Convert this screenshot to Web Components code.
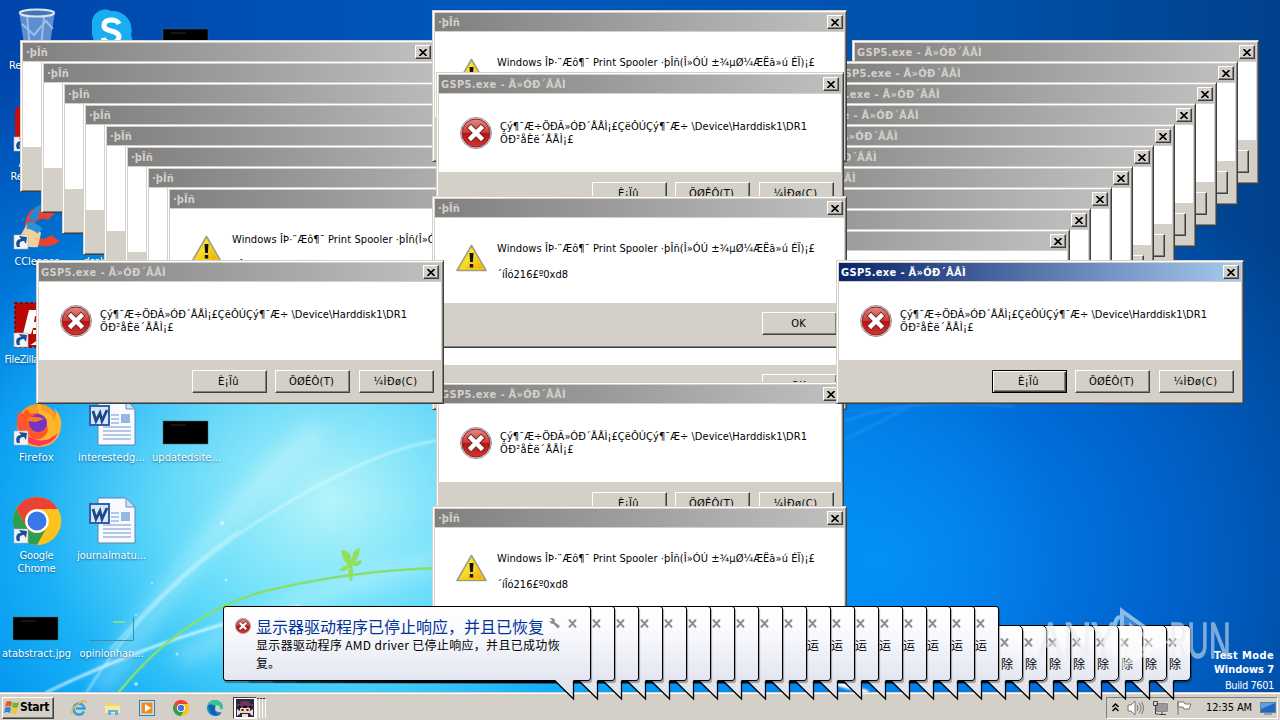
<!DOCTYPE html>
<html lang="en">
<head>
<meta charset="utf-8">
<title>Desktop</title>
<style>
    html, body {
        margin: 0;
        width: 1280px;
        height: 720px;
        overflow: hidden;
        background: #0078e0;
    }
    body {
        font: 11px/13px "DejaVu Sans Condensed", "DejaVu Sans", "Noto Sans CJK SC", sans-serif;
        color: #000;
    }
</style>
</head>
<body>
<desktop-screen></desktop-screen>

<script>
// Windows shortcut arrow, shared by several desktop icons
const arrow = `
    <rect x="1" y="32" width="14" height="14" fill="#f4f4f4" stroke="#a8b4c4" stroke-width=".6"/>
    <path d="M4 44c-2-5 0-8 4-8l-2-3 8 1-1 7-2-3c-4 0-5 2-4 6z" fill="#1b4f94"/>`;

const chromeArt = `
    <circle cx="24" cy="24" r="24" fill="#fbc116"/>
    <path d="M3.200 12A24 24 0 0 1 44.800 12L24 12A12 12 0 0 0 13.600 30z" fill="#ea4335"/>
    <path d="M3.200 12A24 24 0 0 0 24 48L34.400 30A12 12 0 0 1 13.600 30z" fill="#2f9e4f"/>
    <path d="M24 12h20.800A24 24 0 0 1 24 48l10.400-18z" fill="#fcc31e"/>
    <circle cx="24" cy="24" r="11.800" fill="#fff"/>
    <circle cx="24" cy="24" r="9.500" fill="#3b78e7"/>`;

const ART = {
    recycle: `
        <path d="M6 4L12 44q12 5 24 0L42 4z" fill="#8fb6e4" fill-opacity=".65"/>
        <path d="M14 8l3 34M31 10l-3 30M9 17l12 11 12-14 7 8" stroke="#dcecff" stroke-width="2" fill="none" opacity=".5"/>
        <ellipse cx="24" cy="6" rx="17" ry="3.500" fill="#4574b8" stroke="#dde6ee" stroke-width="2"/>`,
    skype: `
        <path d="M4 16a13 13 0 0 1 19-12 19 19 0 0 1 20 24 13 13 0 0 1-18 17A20 20 0 0 1 4 24z" fill="#1aaef0"/>
        <path d="M31 17c-2-5-14-6-15 1-1 8 15 4 15 12-1 8-14 7-16 1" fill="none" stroke="#fff" stroke-width="5"/>`,
    adobe: `
        <rect x="2" y="1" width="44" height="45" rx="6" fill="#c40d0d"/>
        <path d="M10 36c8-3 18-25 13-27s-1 14 16 19-12-2-29 8z" fill="none" stroke="#fff" stroke-width="3"/>${arrow}`,
    ccleaner: `
        <path d="M46 6A21 21 0 1 0 47 38l-9-6A10 10 0 1 1 35 17z" fill="#e8412c"/>
        <path d="M22 5l7-4-6 18-8-3z" fill="#1c8ed8"/>
        <path d="M14 21q10 1 14 9l-3 14q-12 2-20-7z" fill="#efcf9d"/>
        <path d="M14 22q8 1 13 6" stroke="#2794d8" stroke-width="7"/>${arrow}`,
    filezilla: `
        <rect x="2" y="2" width="44" height="44" fill="#b80808" stroke="#910202" stroke-width="2" stroke-dasharray="3 2"/>
        <path d="M10 33L16 9h22l-2 6H22l-1 6h12l-2 6H20l-2 6z" fill="#fff"/>
        <path d="M20 31h20L24 42h16" stroke="#fff" stroke-width="4" fill="none"/>${arrow}`,
    firefox: `
        <circle cx="25" cy="26" r="21" fill="#ff9b22"/>
        <path d="M5 13l5 2 3-5 5 5q8-3 15 2l6 10q2 12-12 14-12-1-14-10-10 4-9-10z" fill="#ff572b"/>
        <path d="M24 2q5 4 5 9 8 2 12 11 4-6 0-13 10 9 6 24-5 16-24 15-16-2-18-15 12 12 24 6 10-7 3-16-8-6-8-21z" fill="#ffb42a"/>
        <path d="M5 27q3 18 21 20 15-2 19-13-12 11-24 6-9-3-16-13z" fill="#ff3759"/>
        <circle cx="25" cy="24" r="9" fill="#7434c7"/>
        <path d="M14 19q8-3 17 1l-8 3-8-1z" fill="#ff781f"/>${arrow}`,
    chrome: chromeArt + arrow,
    word: `
        <path d="M10 1h28l9 9v36H10z" fill="#f8faff" stroke="#5a82b8"/>
        <path d="M38 1v9h9z" fill="#cfdff4" stroke="#6b8ec0"/>
        <path d="M15 28h28M15 32h28M15 36h28M15 40h28M23 16h8M23 20h8M23 24h8" stroke="#6f96d2"/>
        <rect x="33" y="15" width="9" height="9" fill="#94b8e4"/>
        <rect x="2" y="7" width="19" height="19" fill="#d8e7fa" stroke="#2f62a8" stroke-width="2"/>
        <path d="M5 12l3 10 4-8 2 8 5-11" fill="none" stroke="#1d478d" stroke-width="2.800"/>`,
    black: `
        <rect x="0" y="22" width="45" height="23" fill="#000" stroke="#49636a" stroke-width=".5"/>
        <path d="M8 26h15" stroke="#2b2b2b"/>`,
    picture: `
        <path d="M2 45.500h43.500V22" fill="none" stroke="#438ca0"/>
        <path d="M25 27h12" stroke="#7cdf93" stroke-width="2"/>`
};

const CLOSE = `<svg width="8" height="7" viewBox="0 0 8 7"><path d="M.5 0l7 7M7.500 0l-7 7" stroke="#000" stroke-width="1.600"/></svg>`;

const ERROR = `<svg viewBox="0 0 32 32">
    <defs><linearGradient id="r" x2="0" y2="1"><stop stop-color="#e58b85"/><stop offset=".48" stop-color="#cf3a3a"/><stop offset=".5" stop-color="#b51313"/><stop offset="1" stop-color="#d83434"/></linearGradient></defs>
    <circle cx="16" cy="16" r="15.500" fill="#e9e9e9" stroke="#777" stroke-width=".8"/>
    <circle cx="16" cy="16" r="14" fill="url(#r)" stroke="#8e2222"/>
    <path d="M11 11l10 10M21 11L11 21" stroke="#76251f" stroke-width="6.500" stroke-linecap="square"/>
    <path d="M11 11l10 10M21 11L11 21" stroke="#fff" stroke-width="4.500" stroke-linecap="square"/></svg>`;

const WARNING = `<svg viewBox="0 0 32 32">
    <defs><linearGradient id="y" x2="1" y2="1"><stop stop-color="#fff67c"/><stop offset=".5" stop-color="#f5dc28"/><stop offset="1" stop-color="#f59b00"/></linearGradient></defs>
    <path d="M15.500 2.500L30 27.500H1z" fill="url(#y)" stroke="#9b9b94" stroke-width="1.600" stroke-linejoin="round"/>
    <path d="M15.500 5L27.500 26H3.500z" fill="none" stroke="#ffd400"/>
    <path d="M13.500 10h4l-.6 9h-2.800zM13.800 21h3.400v3.500h-3.400z" fill="#111"/></svg>`;

// One line of text, tracked so that it takes the given width
class FitText extends HTMLElement {
    constructor() {
        super();
        this.attachShadow({ mode: "open" });
        this.shadowRoot.innerHTML = `
            <style>
                :host { display: inline-block; white-space: nowrap; }
            </style>
            <span><slot></slot></span>
        `;
    }

    connectedCallback() {
        const want = Number(this.getAttribute("width"));
        const count = this.textContent.length;
        const span = this.shadowRoot.querySelector("span");
        if (!want || !count) return;
        const have = span.getBoundingClientRect().width;
        span.style.letterSpacing = ((want - have) / count) + "px";
    }
}
customElements.define("fit-text", FitText);

class ClassicButton extends HTMLElement {
    constructor() {
        super();
        this.attachShadow({ mode: "open" });
        this.shadowRoot.innerHTML = `
            <style>
                :host {
                    display: flex;
                    align-items: center;
                    justify-content: center;
                    box-sizing: border-box;
                    width: 75px;
                    height: 23px;
                    padding-right: 2px;
                    background: #d4d0c8;
                    border: 1px solid;
                    border-color: #fff #404040 #404040 #fff;
                    box-shadow: inset -1px -1px #808080;
                }
                :host([focused]) {
                    border-color: #000;
                    box-shadow: inset 1px 1px #fff, inset -1px -1px #404040, inset -2px -2px #808080;
                }
            </style>
            <slot></slot>
        `;
    }
}
customElements.define("classic-button", ClassicButton);

class ClassicWindow extends HTMLElement {
    constructor() {
        super();
        this.attachShadow({ mode: "open" });
        this.shadowRoot.innerHTML = `
            <style>
                :host {
                    position: absolute;
                    display: flex;
                    flex-direction: column;
                    box-sizing: border-box;
                    padding: 2px;
                    background: #d4d0c8;
                    border: 1px solid;
                    border-color: #d4d0c8 #404040 #404040 #d4d0c8;
                    box-shadow: inset 1px 1px #fff, inset -1px -1px #808080;
                    overflow: hidden;
                }
                header {
                    display: flex;
                    flex: none;
                    align-items: center;
                    justify-content: space-between;
                    height: 18px;
                    margin: 0 0 1px;
                    padding: 0 2px;
                    background: linear-gradient(90deg, #808080, #c0c0c0);
                    color: #d4d0c8;
                    font-weight: bold;
                }
                :host([active]) header {
                    background: linear-gradient(90deg, #0a246a, #a6caf0);
                    color: #fff;
                }
                .close {
                    display: flex;
                    flex: none;
                    align-items: center;
                    justify-content: center;
                    box-sizing: border-box;
                    width: 16px;
                    height: 14px;
                    margin-left: auto;
                    margin-right: var(--close-inset, -1px);
                    background: #d4d0c8;
                    border: 1px solid;
                    border-color: #fff #404040 #404040 #fff;
                    box-shadow: inset -1px -1px #808080;
                }
                main {
                    display: flex;
                    flex: 1;
                    min-height: 0;
                    background: #fff;
                }
                footer {
                    display: flex;
                    flex: none;
                    gap: 8px;
                    justify-content: flex-end;
                }
            </style>
            <header><slot name="title"></slot><span class="close">${CLOSE}</span></header>
            <main><slot></slot></main>
            <footer><slot name="buttons"></slot></footer>
        `;
    }
}
customElements.define("classic-window", ClassicWindow);

// Message box in two kinds: "service" (warning) and "disk" (error)
class MessageBox extends HTMLElement {
    constructor() {
        super();
        this.attachShadow({ mode: "open" });
    }

    connectedCallback() {
        const disk = this.getAttribute("kind") === "disk";
        const bare = this.hasAttribute("bare");
        const label = text => bare ? "" : text;
        const title = this.hasAttribute("untitled") ? "" :
            disk ? `<fit-text width="125">GSP5.exe - Ã»ÓÐ´ÅÅÌ</fit-text>` : `<fit-text width="22">·þÎñ</fit-text>`;
        const text = disk
            ? `<fit-text width="307">Çý¶¯Æ÷ÖÐÃ»ÓÐ´ÅÅÌ¡£ÇëÔÚÇý¶¯Æ÷ \\Device\\Harddisk1\\DR1</fit-text><fit-text width="74">ÖÐ²åÈë´ÅÅÌ¡£</fit-text>`
            : `<fit-text width="318">Windows ÎÞ·¨Æô¶¯ Print Spooler ·þÎñ(Î»ÓÚ ±¾µØ¼ÆËã»ú ÉÏ)¡£</fit-text><fit-text class="last" width="71">´íÎó216£º0xd8</fit-text>`;
        const buttons = disk
            ? `<classic-button slot="buttons" ${this.hasAttribute("active") ? "focused" : ""}>${label(`<fit-text width="21">È¡Ïû</fit-text>`)}</classic-button>
               <classic-button slot="buttons">${label(`<fit-text width="45">ÖØÊÔ(T)</fit-text>`)}</classic-button>
               <classic-button slot="buttons" class="third">${label(`<fit-text width="44">¼ÌÐø(C)</fit-text>`)}</classic-button>`
            : `<classic-button slot="buttons">${label("OK")}</classic-button>`;
        this.shadowRoot.innerHTML = `
            <style>
                :host { display: contents; }
                classic-window {
                    left: ${this.getAttribute("x")}px;
                    top: ${this.getAttribute("y")}px;
                    width: ${disk ? (bare ? 407 : 408) : 415}px;
                    height: ${disk ? 144 : 152}px;
                    --close-inset: ${disk && !bare ? 0 : -1}px;
                }
                .icon {
                    flex: none;
                    width: 32px;
                    height: 32px;
                    margin: ${disk ? "23px 8px 0 21px" : "25px 9px 0 21px"};
                }
                .text {
                    display: flex;
                    flex-direction: column;
                    align-items: flex-start;
                    padding-top: ${disk ? 26 : 24}px;
                }
                .last { margin-top: 13px; }
                [slot="title"] { margin-left: ${disk ? 0 : 1}px; }
                classic-button { margin: ${disk ? 10 : 9}px 0 ${disk ? 8 : 10}px; }
                classic-button:last-of-type { margin-right: 7px; }
                .third { margin-left: 1px; }
            </style>
            <classic-window ${this.hasAttribute("active") ? "active" : ""}>
                <span slot="title">${title}</span>
                ${bare ? "" : `<span class="icon">${disk ? ERROR : WARNING}</span><div class="text">${text}</div>`}
                ${buttons}
            </classic-window>
        `;
    }
}
customElements.define("message-box", MessageBox);

class DesktopIcon extends HTMLElement {
    constructor() {
        super();
        this.attachShadow({ mode: "open" });
    }

    connectedCallback() {
        this.shadowRoot.innerHTML = `
            <style>
                :host {
                    display: flex;
                    flex-direction: column;
                    align-items: center;
                    box-sizing: border-box;
                    padding-top: 7px;
                    color: #fff;
                    text-align: center;
                    text-shadow: 0 1px 2px rgba(0, 50, 90, .7);
                }
                svg { flex: none; width: 48px; height: 48px; overflow: visible; }
                .label {
                    display: flex;
                    flex-direction: column;
                    align-items: center;
                    width: 75px;
                    margin-top: 4px;
                }
            </style>
            <svg viewBox="0 0 48 48">${ART[this.getAttribute("art")]}</svg>
            <div class="label"><slot></slot></div>
        `;
    }
}
customElements.define("desktop-icon", DesktopIcon);

class DesktopWallpaper extends HTMLElement {
    constructor() {
        super();
        this.attachShadow({ mode: "open" });
        this.shadowRoot.innerHTML = `
            <style>
                :host {
                    display: block;
                    width: 1280px;
                    height: 720px;
                    background:
                        radial-gradient(ellipse 400px 340px at 330px 500px, rgba(190, 248, 250, .95), rgba(130, 234, 250, .75) 40%, rgba(60, 205, 250, .35) 75%, rgba(0, 170, 250, 0)),
                        radial-gradient(ellipse 760px 560px at 300px 600px, #14bcfc, rgba(0, 155, 248, .88) 50%, rgba(0, 110, 220, 0)),
                        radial-gradient(ellipse 560px 440px at 880px 560px, #0588f6, rgba(0, 112, 228, .7) 50%, rgba(0, 80, 170, 0)),
                        linear-gradient(90deg, #0046ac, #0058bc 40%, #0052ac 75%, #00418c);
                }
                svg { display: block; }
            </style>
            <svg width="1280" height="720" fill="none">
                <defs>
                    <filter id="soft"><feGaussianBlur stdDeviation="1.200"/></filter>
                    <filter id="glow"><feGaussianBlur stdDeviation="9"/></filter>
                </defs>
                <g filter="url(#glow)" stroke="#e6ffff" opacity=".3">
                    <path d="M100 690Q210 520 320 430" stroke-width="22"/>
                    <path d="M180 660Q300 590 440 560" stroke-width="16"/>
                </g>
                <g filter="url(#soft)" stroke="#e9ffff">
                    <path d="M45 693Q175 630 300 606" stroke-width="2.500" opacity=".8"/>
                    <path d="M86 693Q150 590 260 520T440 440" stroke-width="1.800" opacity=".6"/>
                    <path d="M110 650Q180 570 240 530" stroke-width="2" opacity=".5"/>
                </g>
                <path d="M118 693Q185 610 270 590T440 568" stroke="#86df6c" stroke-width="2.500"/>
                <path d="M341 550q10 0 11 11 0-12 8-13-1 10-6 15 8-5 8-1-4 6-10 3 3 8-1 17-5-8-1-15-6 6-11 3 4-4 9-5-6-5-7-15z" fill="#94de48" opacity=".9"/>
                <g fill="#e8ffff" opacity=".6">
                    <circle cx="222" cy="523" r="2"/><circle cx="226" cy="580" r="1.500"/>
                    <circle cx="152" cy="583" r="1"/><circle cx="136" cy="684" r="2"/>
                    <circle cx="177" cy="654" r="1.500"/><circle cx="136" cy="615" r="1"/>
                </g>
                <path d="M845 421q70-26 170-14M845 440l230-120" stroke="#58b8ff" stroke-width="3" opacity=".2" filter="url(#soft)"/>
                <path d="M830 682q16 3 38 11" stroke="#fff" stroke-width="5" filter="url(#soft)"/>
            </svg>
        `;
    }
}
customElements.define("desktop-wallpaper", DesktopWallpaper);

class BalloonTip extends HTMLElement {
    constructor() {
        super();
        this.attachShadow({ mode: "open" });
    }

    connectedCallback() {
        const small = this.hasAttribute("small");
        const height = small ? 56 : 75;
        this.shadowRoot.innerHTML = `
            <style>
                :host {
                    position: absolute;
                    display: block;
                    box-sizing: border-box;
                    width: 368px;
                    height: ${height}px;
                    border: 1px solid #000;
                    border-radius: ${small ? 5 : 3}px;
                    background: linear-gradient(#fff, #fbfbfe 30%, #e3e6f1);
                    box-shadow: 1px 2px 1px rgba(0, 0, 0, .35);
                }
                .tail { position: absolute; right: 14px; top: ${height - 3}px; }
                .close { position: absolute; right: 13px; top: 12px; width: 9px; height: 9px; }
                .mark {
                    position: absolute;
                    right: ${small ? 9 : 11}px;
                    top: 29px;
                    font: 12px/18px "Noto Sans CJK SC", sans-serif;
                }
            </style>
            <slot></slot>
            <span class="mark">${this.getAttribute("mark") || ""}</span>
            <svg class="close" viewBox="0 0 9 9"><path d="M1 .5l7 8M8 .5l-7 8" stroke="#8f8f8f" stroke-width="2"/></svg>
            <svg class="tail" width="22" height="22"><path d="M1 0L20 0V20L1 1z" fill="#e3e5ee"/><path d="M.5 1.500L19.500 20V1.500" fill="none" stroke="#000" stroke-width="1.300"/></svg>
        `;
    }
}
customElements.define("balloon-tip", BalloonTip);

class DriverNotice extends HTMLElement {
    constructor() {
        super();
        this.attachShadow({ mode: "open" });
        this.shadowRoot.innerHTML = `
            <style>
                :host {
                    display: grid;
                    grid-template-columns: 16px 288px 14px;
                    column-gap: 5px;
                    padding: 9px 0 0 11px;
                    font-family: "Noto Sans CJK SC", sans-serif;
                }
                .icon { width: 16px; height: 16px; margin-top: 2px; }
                h1 {
                    margin: 0;
                    font-size: 16px;
                    line-height: 20px;
                    font-weight: normal;
                    color: #003399;
                    white-space: nowrap;
                }
                p {
                    grid-column: 2 / 4;
                    margin: 0;
                    font-size: 12px;
                    line-height: 18px;
                }
            </style>
            <span class="icon">${ERROR}</span>
            <h1>显示器驱动程序已停止响应，并且已恢复</h1>
            <svg width="12" height="13" viewBox="0 -1 12 13"><path d="M1 1l3 0 2 2-.5 2L11 9 9 11.500 4.500 7 2 6.500 0 4l2 .5 1-1z" fill="#8d8d8d"/></svg>
            <p><fit-text width="304">显示器驱动程序 AMD driver 已停止响应，并且已成功恢</fit-text><br>复。</p>
        `;
    }
}
customElements.define("driver-notice", DriverNotice);

class TaskBar extends HTMLElement {
    constructor() {
        super();
        this.attachShadow({ mode: "open" });
        this.shadowRoot.innerHTML = `
            <style>
                :host {
                    display: flex;
                    align-items: center;
                    box-sizing: border-box;
                    height: 28px;
                    padding: 2px 2px 0;
                    background: #d4d0c8;
                    border-top: 1px solid #d4d0c8;
                    box-shadow: inset 0 1px #fff;
                }
                .start {
                    display: flex;
                    align-items: center;
                    gap: 0;
                    box-sizing: border-box;
                    width: 52px;
                    height: 22px;
                    padding-left: 1px;
                    border: 1px solid;
                    border-color: #fff #404040 #404040 #fff;
                    box-shadow: inset -1px -1px #808080;
                    font-weight: bold;
                    font-size: 12px;
                }
                .quick { display: flex; gap: 18px; margin-left: 17px; }
                .quick svg { width: 16px; height: 16px; overflow: visible; }
                .app {
                    display: flex;
                    align-items: center;
                    box-sizing: border-box;
                    width: 24px;
                    height: 22px;
                    margin-left: 10px;
                    padding-left: 2px;
                    background: #fff;
                    border: 1px solid;
                    border-color: #404040 #fff #fff #404040;
                }
                .edge { width: 3px; height: 20px; border-right: 1px solid #fff; border-top: 1px solid #404040; box-sizing: border-box; }
                .tray {
                    display: flex;
                    align-items: center;
                    gap: 8px;
                    box-sizing: border-box;
                    width: 172px;
                    height: 22px;
                    margin-left: auto;
                    padding-left: 5px;
                    border: 1px solid;
                    border-color: #808080 #fff #fff #808080;
                    white-space: nowrap;
                }
                .tray svg { flex: none; }
                .clock { margin-left: 6px; }
            </style>
            <div class="start">
                <svg width="16" height="16" viewBox="0 0 16 16">
                    <path d="M2 2q3-2 6 0L7 7Q4 5 1 7z" fill="#e95b23"/><path d="M9 2q3 2 6 0l-1 5q-3 2-6 0z" fill="#75b42c"/>
                    <path d="M1 8q3-2 6 0l-1 5q-3-2-6 0z" fill="#2689d8"/><path d="M8 8q3 2 6 0l-1 5q-3 2-6 0z" fill="#f7c52b"/>
                </svg>
                <fit-text width="29">Start</fit-text>
            </div>
            <div class="quick">
                <svg viewBox="0 0 16 16">
                    <path d="M13 11.500A5.500 5.500 0 1 1 13.500 8.500H5" fill="none" stroke="#2fa2df" stroke-width="2.600"/>
                    <path d="M1 14Q-1 10 7 4T15 3" fill="none" stroke="#e7b834" stroke-width="1.400"/>
                </svg>
                <svg viewBox="0 0 16 16">
                    <path d="M1 2h5l1 2h7v9H1z" fill="#f0d477"/><path d="M0 6h15v7H0z" fill="#f9e99e"/>
                    <path d="M3 15v-5h10v5h-3v-3H6v3z" fill="#5fb2e5"/>
                </svg>
                <svg viewBox="0 0 16 16">
                    <rect x=".5" y=".5" width="15" height="15" fill="#cbe5f8" stroke="#3778b8"/><rect x="2.500" y="2.500" width="11" height="11" fill="#f28a17"/>
                    <path d="M6 4l6 4-6 4z" fill="#fff"/>
                </svg>
                <svg viewBox="0 0 48 48">${chromeArt}</svg>
                <svg viewBox="0 0 16 16">
                    <circle cx="8" cy="8" r="8" fill="#1685d5"/><path d="M0 7Q3-1 10 .3q6 2 6 7.700-1 3-6 3Q10 5 5 5 2 5 0 7z" fill="#35c58d"/>
                    <path d="M16 12Q9 13 8 9q0-3 2-4 3 1 3 3.500-1 2 3 0z" fill="#d4d0c8"/><path d="M1 5q8-2 7 5 0 5 6 4-6 4-10-1z" fill="#0c62b5"/>
                </svg>
            </div>
            <div class="app">
                <svg width="18" height="18" viewBox="0 0 18 18">
                    <rect width="18" height="18" fill="#302538"/><path d="M1 5h3l1-3h8l1 3h3v2H1z" fill="#70335d"/>
                    <path d="M4 8h10v6H4z" fill="#f3d2b7"/><path d="M3 6l3 3 3-3 3 3 3-3v3H3z" fill="#140d26"/>
                    <path d="M6.500 10v2M11.500 10v2" stroke="#231b48" stroke-width="2"/><path d="M1 10l3 2v3l-3 2zM17 10l-3 2v3l3 2zM6 15h6v3H6z" fill="#eadde1"/>
                </svg>
            </div><span class="edge"></span><span class="edge"></span><span class="edge"></span>
            <div class="tray">
                <svg width="7" height="9"><path d="M.5 4l3-3 3 3M.5 8l3-3 3 3" fill="none" stroke="#000" stroke-width="1.500"/></svg>
                <svg width="17" height="16"><path d="M1 5h3l4-4v14l-4-4H1z" fill="#fff" stroke="#777"/><path d="M10 5q2 3 0 6M12 3q4 5 0 10M14.500 2q4 6 0 12" fill="none" stroke="#777"/></svg>
                <svg width="16" height="16"><rect x="4.500" y="3.500" width="11" height="8" fill="#999" stroke="#555"/><path d="M4 3h12v9H4z" fill="none" stroke="#fff" stroke-width=".6"/><path d="M7 14.500h7M10 12v2M1.500 1.500h4v4h-4zM3.500 6v8h3" fill="none" stroke="#444"/></svg>
                <svg width="16" height="16"><path d="M2 1v14M2 2h6l1 2h6l-2 5H8L7 7H2z" fill="#fff" stroke="#777"/></svg>
                <span class="clock"><fit-text width="46">12:35 AM</fit-text></span>
                <svg width="16" height="14"><rect x=".5" y="1.500" width="15" height="10" fill="#2566bc" stroke="#5785a9"/><path d="M1 2h14L1 8z" fill="#609ee2"/><path d="M4 13h8" stroke="#50708b"/></svg>
            </div>
        `;
    }
}
customElements.define("task-bar", TaskBar);

class BrandMark extends HTMLElement {
    constructor() {
        super();
        this.attachShadow({ mode: "open" });
        this.shadowRoot.innerHTML = `
            <style>
                :host { display: block; opacity: .55; }
                svg { display: block; }
                text {
                    font-family: "Open Sans", sans-serif;
                    font-size: 49px;
                    fill: #e8ecf1;
                    stroke: #e8ecf1;
                    stroke-width: 1.600;
                }
            </style>
            <svg width="200" height="80">
                <text x="1" y="56" textLength="76" lengthAdjust="spacingAndGlyphs">ANY</text>
                <path d="M78 53V25q0-10 6-10M85 9v43M85 9l43 31-43 25zM94 24l22 16-22 15z" fill="none" stroke="#fff" stroke-width="4"/>
                <path d="M86 11l40 29-40 24z" fill="#fff" fill-opacity=".4"/>
                <text x="132" y="56" textLength="62" lengthAdjust="spacingAndGlyphs">RUN</text>
            </svg>
        `;
    }
}
customElements.define("brand-mark", BrandMark);

class DesktopScreen extends HTMLElement {
    constructor() {
        super();
        this.attachShadow({ mode: "open" });

        const box = (kind, x, y, extra = "") => `<message-box kind="${kind}" x="${x}" y="${y}" ${extra}></message-box>`;

        let windows = "";
        for (let i = 0; i < 10; i++) {
            windows += box("disk", 852 - i * 21, 40 + i * 21, i > 6 ? "bare untitled" : "bare");
        }
        for (let i = 0; i < 8; i++) {
            windows += box("service", 20 + i * 21, 40 + i * 21, i < 7 ? "bare" : "");
        }
        windows += box("service", 432, 10);
        windows += box("disk", 436, 72);
        windows += box("service", 432, 258);
        windows += box("service", 432, 196);
        windows += box("disk", 436, 382);
        windows += box("service", 432, 506);
        windows += box("disk", 36, 260);
        windows += box("disk", 836, 260, "active");

        // the oldest balloon lies on top, so the row is added from the right
        let balloons = "";
        for (let i = 7; i >= 0; i--) {
            balloons += `<balloon-tip small mark="除" style="left:${655 + i * 24}px;top:625px"></balloon-tip>`;
        }
        for (let i = 17; i > 0; i--) {
            balloons += `<balloon-tip mark="${i > 9 ? "运" : ""}" style="left:${223 + i * 24}px;top:606px"></balloon-tip>`;
        }

        const icon = (art, col, row, label, widths = []) => {
            const lines = label.split("|").map((line, i) => `<fit-text width="${widths[i] || 0}">${line}</fit-text>`).join("");
            return `<desktop-icon art="${art}" style="grid-area:${row}/${col}">${lines}</desktop-icon>`;
        };

        this.shadowRoot.innerHTML = `
            <style>
                :host {
                    position: relative;
                    display: block;
                    width: 1280px;
                    height: 720px;
                    overflow: hidden;
                }
                .icons {
                    position: absolute;
                    left: -1px;
                    top: 0;
                    display: grid;
                    grid-template-columns: repeat(3, 75px);
                    grid-template-rows: repeat(7, 98px);
                }
                .build {
                    position: absolute;
                    right: 6px;
                    top: 649px;
                    display: flex;
                    flex-direction: column;
                    align-items: flex-end;
                    line-height: 14px;
                    color: #fff;
                }
                .build b:last-of-type { margin-bottom: 2px; }
                task-bar { position: absolute; left: 0; right: 0; bottom: 0; }
                brand-mark { position: absolute; left: 1037px; top: 602px; pointer-events: none; }
            </style>
            <desktop-wallpaper></desktop-wallpaper>
            <div class="icons">
                ${icon("recycle", 1, 1, "Recycle Bin", [55])}
                ${icon("adobe", 1, 2, "Acrobat|Reader DC", [36, 52])}
                ${icon("ccleaner", 1, 3, "CCleaner", [44])}
                ${icon("filezilla", 1, 4, "FileZilla Client", [64])}
                ${icon("firefox", 1, 5, "Firefox", [35])}
                ${icon("chrome", 1, 6, "Google|Chrome", [34, 38])}
                ${icon("black", 1, 7, "atabstract.jpg", [69])}
                ${icon("skype", 2, 1, "")}
                ${icon("word", 2, 3, "dealsgame...", [56])}
                ${icon("word", 2, 5, "interestedg...", [67])}
                ${icon("word", 2, 6, "journalmatu...", [69])}
                ${icon("picture", 2, 7, "opinionhan...", [64])}
                ${icon("black", 3, 1, "")}
                ${icon("black", 3, 5, "updatedsite...", [69])}
            </div>
            ${windows}
            <div class="build">
                <b><fit-text width="60">Test Mode</fit-text></b>
                <b><fit-text width="60">Windows 7</fit-text></b>
                <fit-text width="49">Build 7601</fit-text>
            </div>
            <task-bar></task-bar>
            ${balloons}
            <balloon-tip style="left:223px;top:606px"><driver-notice></driver-notice></balloon-tip>
            <brand-mark></brand-mark>
        `;
    }
}
customElements.define("desktop-screen", DesktopScreen);
</script>
</body>
</html>
